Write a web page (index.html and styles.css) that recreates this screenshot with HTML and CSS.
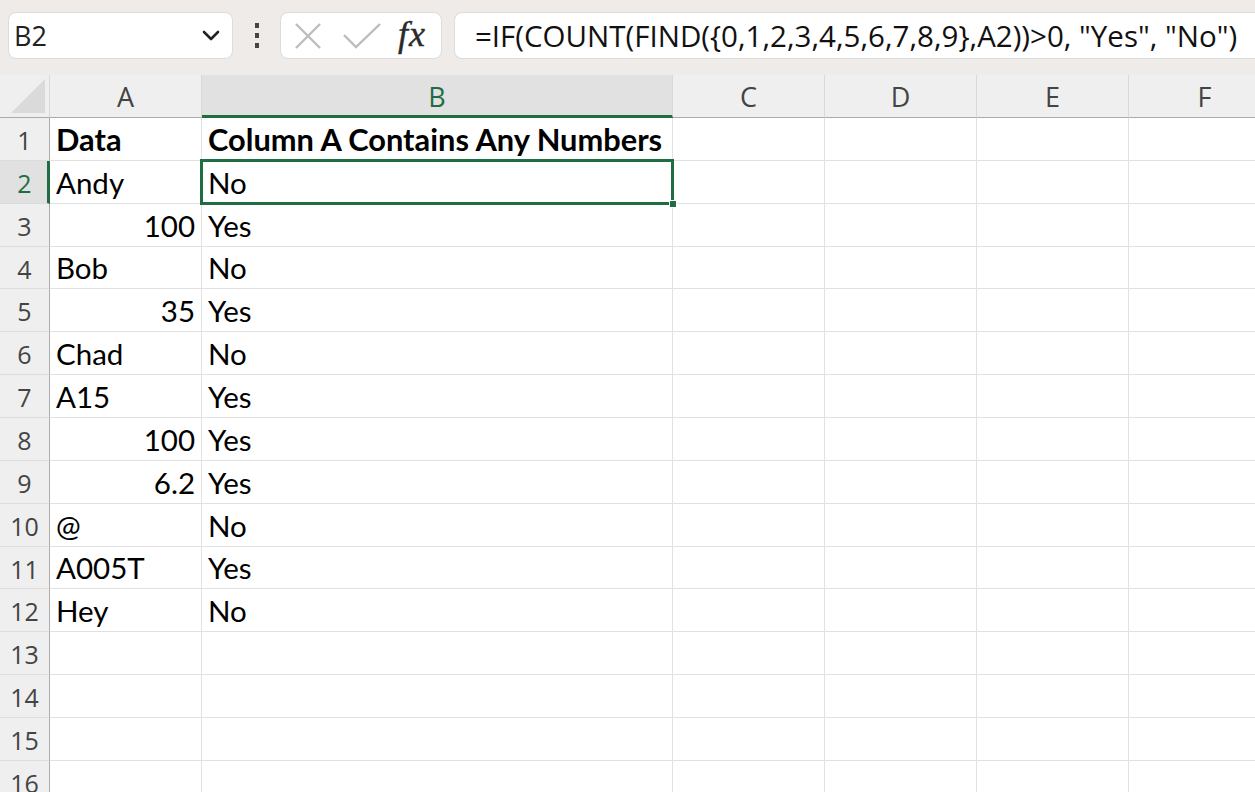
FILE: index.html
```html
<!DOCTYPE html>
<html lang="en">
<head>
  <meta charset="UTF-8" />
  <title>Contains Numbers</title>
  <link rel="stylesheet" href="styles.css">
</head>
<body>
  <div class="toolbar">
    <div class="name-box">
      <span class="name-text">B2</span>
      <svg class="chevron" width="18" height="12" viewBox="0 0 18 12"><path d="M2 2 L9 9 L16 2" fill="none" stroke="#222" stroke-width="2.6" stroke-linecap="round" stroke-linejoin="round"/></svg>
    </div>
    <div class="kebab"><i></i><i></i><i></i></div>
    <div class="fx-buttons">
      <svg width="30" height="30" viewBox="0 0 30 30"><path d="M3 3 L27 27 M27 3 L3 27" stroke="#bdbdbd" stroke-width="2.4" fill="none"/></svg>
      <svg width="40" height="30" viewBox="0 0 40 30"><path d="M2 14 L14 26 L38 3" stroke="#bdbdbd" stroke-width="2.4" fill="none"/></svg>
      <span class="fx">fx</span>
    </div>
    <div class="formula">=IF(COUNT(FIND({0,1,2,3,4,5,6,7,8,9},A2))&gt;0, "Yes", "No")</div>
  </div>

  <div class="sheet">
    <div class="corner"><span class="tri"></span></div>
    <div class="col-head">A</div>
    <div class="col-head selected">B</div>
    <div class="col-head">C</div>
    <div class="col-head">D</div>
    <div class="col-head">E</div>
    <div class="col-head">F</div>

    <div class="row-head">1</div>
    <div class="cell bold">Data</div>
    <div class="cell bold">Column A Contains Any Numbers</div>
    <div class="cell"></div><div class="cell"></div><div class="cell"></div><div class="cell"></div>

    <div class="row-head selected">2</div>
    <div class="cell">Andy</div>
    <div class="cell active">No<span class="handle"></span></div>
    <div class="cell"></div><div class="cell"></div><div class="cell"></div><div class="cell"></div>

    <div class="row-head">3</div>
    <div class="cell num">100</div>
    <div class="cell">Yes</div>
    <div class="cell"></div><div class="cell"></div><div class="cell"></div><div class="cell"></div>

    <div class="row-head">4</div>
    <div class="cell">Bob</div>
    <div class="cell">No</div>
    <div class="cell"></div><div class="cell"></div><div class="cell"></div><div class="cell"></div>

    <div class="row-head">5</div>
    <div class="cell num">35</div>
    <div class="cell">Yes</div>
    <div class="cell"></div><div class="cell"></div><div class="cell"></div><div class="cell"></div>

    <div class="row-head">6</div>
    <div class="cell">Chad</div>
    <div class="cell">No</div>
    <div class="cell"></div><div class="cell"></div><div class="cell"></div><div class="cell"></div>

    <div class="row-head">7</div>
    <div class="cell">A15</div>
    <div class="cell">Yes</div>
    <div class="cell"></div><div class="cell"></div><div class="cell"></div><div class="cell"></div>

    <div class="row-head">8</div>
    <div class="cell num">100</div>
    <div class="cell">Yes</div>
    <div class="cell"></div><div class="cell"></div><div class="cell"></div><div class="cell"></div>

    <div class="row-head">9</div>
    <div class="cell num">6.2</div>
    <div class="cell">Yes</div>
    <div class="cell"></div><div class="cell"></div><div class="cell"></div><div class="cell"></div>

    <div class="row-head">10</div>
    <div class="cell">@</div>
    <div class="cell">No</div>
    <div class="cell"></div><div class="cell"></div><div class="cell"></div><div class="cell"></div>

    <div class="row-head">11</div>
    <div class="cell">A005T</div>
    <div class="cell">Yes</div>
    <div class="cell"></div><div class="cell"></div><div class="cell"></div><div class="cell"></div>

    <div class="row-head">12</div>
    <div class="cell">Hey</div>
    <div class="cell">No</div>
    <div class="cell"></div><div class="cell"></div><div class="cell"></div><div class="cell"></div>

    <div class="row-head">13</div>
    <div class="cell"></div><div class="cell"></div><div class="cell"></div><div class="cell"></div><div class="cell"></div><div class="cell"></div>

    <div class="row-head">14</div>
    <div class="cell"></div><div class="cell"></div><div class="cell"></div><div class="cell"></div><div class="cell"></div><div class="cell"></div>

    <div class="row-head">15</div>
    <div class="cell"></div><div class="cell"></div><div class="cell"></div><div class="cell"></div><div class="cell"></div><div class="cell"></div>

    <div class="row-head">16</div>
    <div class="cell"></div><div class="cell"></div><div class="cell"></div><div class="cell"></div><div class="cell"></div><div class="cell"></div>
  </div>
</body>
</html>
```

FILE: styles.css
```css
* {
  box-sizing: border-box;
  margin: 0;
  padding: 0;
}

body {
  width: 1255px;
  height: 792px;
  overflow: hidden;
  background: #fff;
  font-family: "Open Sans", "Noto Sans", sans-serif;
}

/* formula bar */
.toolbar {
  height: 75px;
  background: #eeebe9;
  display: flex;
  align-items: center;
  padding: 0 0 4px 8px;
}

.name-box {
  width: 225px;
  height: 47px;
  background: #fff;
  border: 1px solid #dcdcdc;
  border-radius: 8px;
  display: flex;
  align-items: center;
  justify-content: space-between;
  padding: 0 12px 0 5px;
}

.name-text {
  font-size: 27px;
  color: #222;
}

.kebab {
  width: 47px;
  display: flex;
  flex-direction: column;
  align-items: center;
  gap: 5px;
}

.kebab i {
  width: 4px;
  height: 5px;
  background: #444;
}

.fx-buttons {
  width: 162px;
  height: 47px;
  background: #fff;
  border: 1px solid #dcdcdc;
  border-radius: 8px;
  display: flex;
  align-items: center;
  gap: 19px;
  padding-left: 12px;
}

.fx {
  font-family: "Liberation Serif", "DejaVu Serif", serif;
  font-style: italic;
  font-size: 36px;
  color: #2a2a2a;
  letter-spacing: 1px;
  margin-top: -4px;
  margin-left: -3px;
  -webkit-text-stroke: 0.4px #2a2a2a;
}

.formula {
  flex: 1;
  margin-left: 12px;
  height: 47px;
  background: #fff;
  border: 1px solid #dcdcdc;
  border-right: none;
  border-radius: 8px 0 0 8px;
  display: flex;
  align-items: center;
  padding-left: 20px;
  font-size: 29.5px;
  color: #111;
  white-space: nowrap;
}

/* grid */
.sheet {
  display: grid;
  grid-template-columns: 50px 152px 471px 152px 152px 152px 152px;
  grid-template-rows: 43px;
  grid-auto-rows: 42.87px;
}

.corner {
  background: #efefef;
  border-right: 1px solid #d8d8d8;
  border-bottom: 1px solid #aaa;
  position: relative;
}

.tri {
  position: absolute;
  right: 4px;
  bottom: 4px;
  width: 0;
  height: 0;
  border-left: 34px solid transparent;
  border-bottom: 34px solid #dadada;
}

.col-head {
  background: #efefef;
  border-right: 1px solid #d8d8d8;
  border-bottom: 1px solid #aaa;
  display: flex;
  align-items: center;
  justify-content: center;
  font-size: 27px;
  color: #444;
}

.col-head.selected {
  background: #e1e1e1;
  color: #1e6e42;
  border-bottom: 3px solid #1e6e42;
  padding-top: 2px;
}

.row-head {
  background: #efefef;
  border-right: 1px solid #aaa;
  border-bottom: 1px solid #dcdcdc;
  display: flex;
  align-items: center;
  justify-content: center;
  font-size: 25px;
  color: #444;
  padding-top: 2px;
}

.row-head.selected {
  background: #e1e1e1;
  color: #1e6e42;
  border-right: 3px solid #1e6e42;
  padding-left: 2px;
}

.cell {
  border-right: 1px solid #e1e1e1;
  border-bottom: 1px solid #e1e1e1;
  display: flex;
  align-items: flex-end;
  padding: 0 6px 1px 6px;
  font-family: "Lato", sans-serif;
  font-size: 29.5px;
  line-height: 38px;
  color: #000;
  white-space: nowrap;
}

.cell.bold {
  font-weight: bold;
  font-size: 30.8px;
}

.cell.num {
  justify-content: flex-end;
}

.cell.active {
  position: relative;
}

.cell.active::after {
  content: "";
  position: absolute;
  left: -2px;
  top: -2px;
  right: -2px;
  bottom: -2px;
  border: 3px solid #1e6e42;
}

.handle {
  position: absolute;
  right: -5px;
  bottom: -5px;
  width: 8px;
  height: 8px;
  background: #1e6e42;
  border: 1px solid #fff;
  z-index: 2;
}
```
